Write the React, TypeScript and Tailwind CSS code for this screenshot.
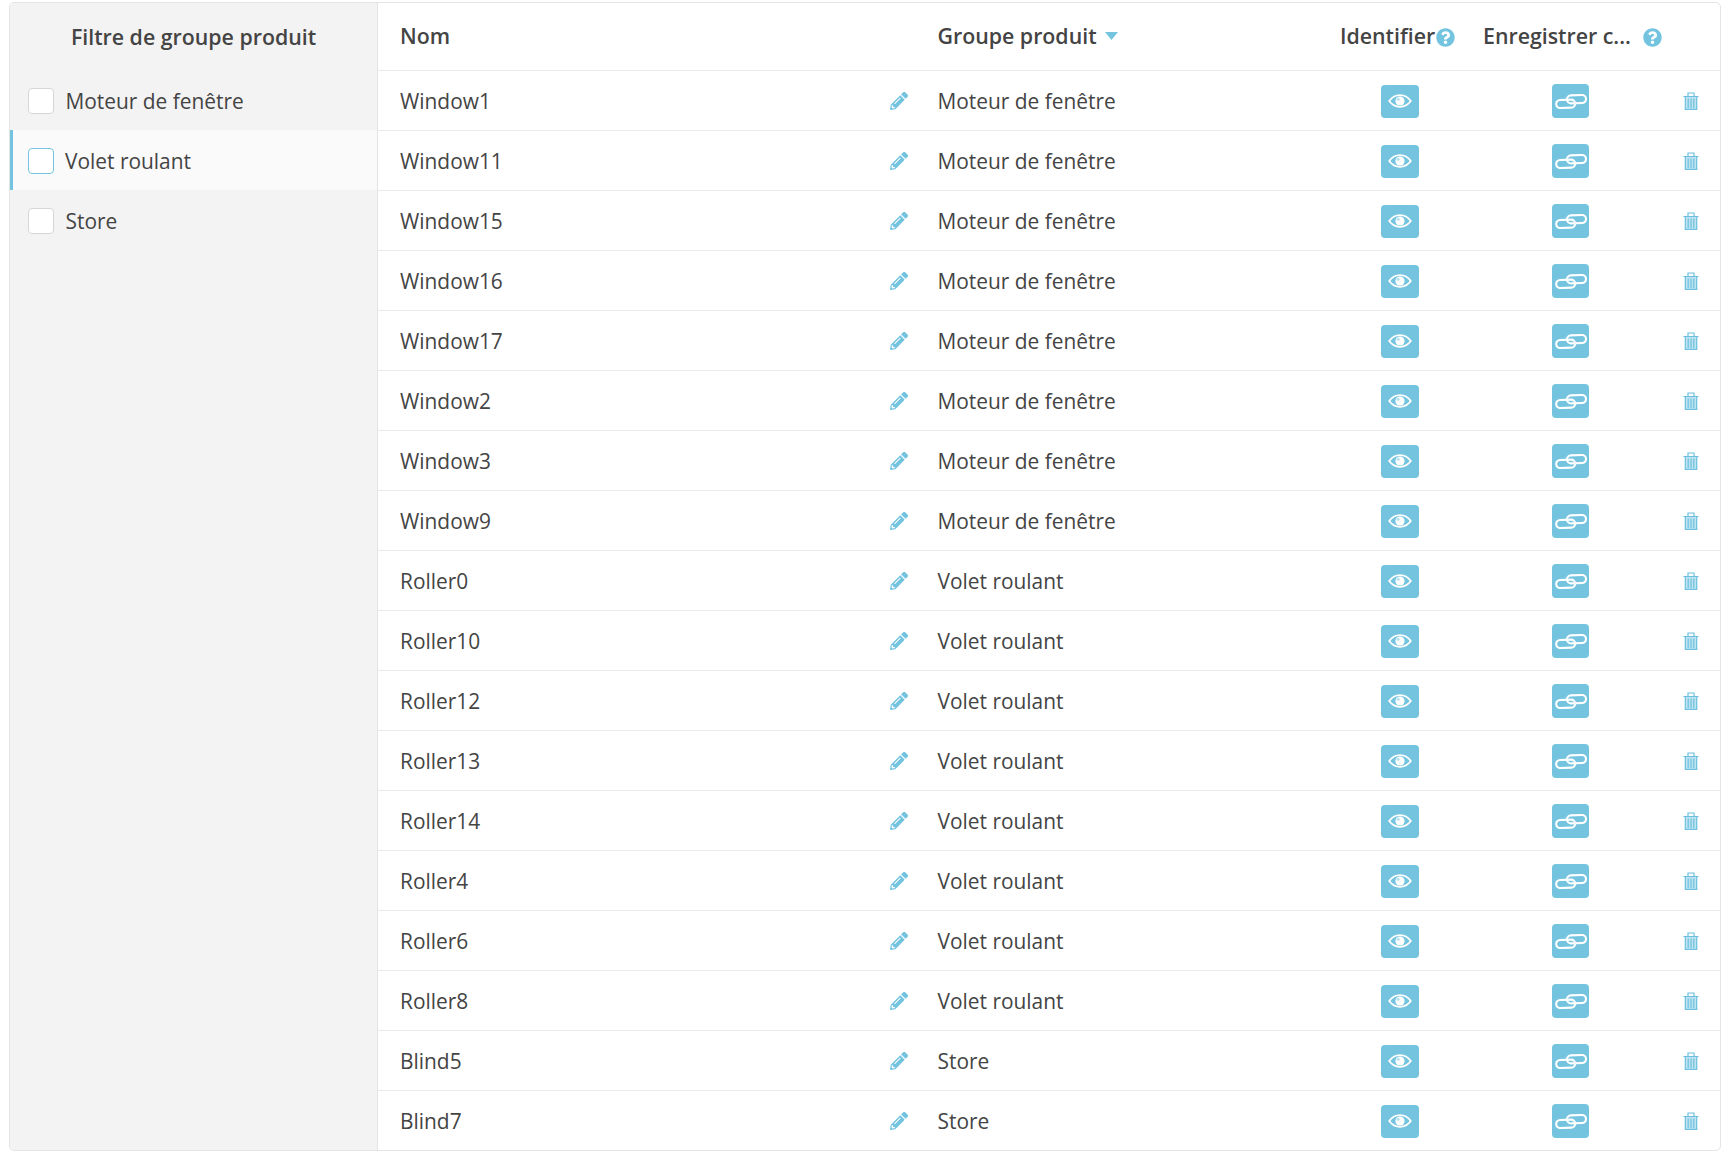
import { FaPencilAlt, FaQuestionCircle } from "react-icons/fa";

const products = [
  { name: "Window1", group: "Moteur de fenêtre" },
  { name: "Window11", group: "Moteur de fenêtre" },
  { name: "Window15", group: "Moteur de fenêtre" },
  { name: "Window16", group: "Moteur de fenêtre" },
  { name: "Window17", group: "Moteur de fenêtre" },
  { name: "Window2", group: "Moteur de fenêtre" },
  { name: "Window3", group: "Moteur de fenêtre" },
  { name: "Window9", group: "Moteur de fenêtre" },
  { name: "Roller0", group: "Volet roulant" },
  { name: "Roller10", group: "Volet roulant" },
  { name: "Roller12", group: "Volet roulant" },
  { name: "Roller13", group: "Volet roulant" },
  { name: "Roller14", group: "Volet roulant" },
  { name: "Roller4", group: "Volet roulant" },
  { name: "Roller6", group: "Volet roulant" },
  { name: "Roller8", group: "Volet roulant" },
  { name: "Blind5", group: "Store" },
  { name: "Blind7", group: "Store" },
];

const filters = [
  { label: "Moteur de fenêtre", active: false },
  { label: "Volet roulant", active: true },
  { label: "Store", active: false },
];

function EyeIcon() {
  return (
    <svg width="24" height="14" viewBox="0 0 24 14" fill="none">
      <path
        d="M1.2 7C4 3.2 7.8 1.2 12 1.2S20 3.2 22.8 7C20 10.8 16.2 12.8 12 12.8S4 10.8 1.2 7Z"
        stroke="white"
        strokeWidth="1.8"
      />
      <circle cx="12" cy="7" r="4.6" fill="white" />
      <circle cx="10.2" cy="5.2" r="1.5" fill="#b5e0ef" />
    </svg>
  );
}

function LinkIcon() {
  return (
    <svg className="ml-[1px]" width="32" height="15" viewBox="0 0 32 15" fill="none" stroke="white" strokeWidth="2.1">
      <rect x="12" y="1.2" width="19" height="8" rx="4" transform="rotate(-2 21 5)" />
      <rect x="1.2" y="5.8" width="19" height="8" rx="4" transform="rotate(-2 11 10)" />
    </svg>
  );
}

function TrashIcon() {
  return (
    <svg width="16" height="18" viewBox="0 0 16 18" fill="none">
      <rect x="2" y="4.5" width="12" height="13" fill="#bfe3f0" />
      <path d="M0.5 4.5H15.5M5 4.2V1H11V4.2" stroke="#6cc0de" strokeWidth="1.2" />
      <path
        d="M2.3 4.5V17.3H13.7V4.5M5.2 6.5V16M8 6.5V16M10.8 6.5V16"
        stroke="#6cc0de"
        strokeWidth="1.2"
      />
    </svg>
  );
}

function HelpIcon({ className }: { className: string }) {
  return <FaQuestionCircle className={`h-[19px] w-[19px] text-[#74c4e0] ${className}`} />;
}

function Sidebar() {
  return (
    <div className="w-[368px] shrink-0 border-r border-[#e4e4e4] bg-[#f3f3f3]">
      <div className="flex h-[67px] items-center justify-center pt-[1px] text-[21.33px] font-semibold">
        Filtre de groupe produit
      </div>
      {filters.map((f) => (
        <div
          key={f.label}
          className={
            f.active
              ? "flex h-[60px] items-center gap-[11px] border-l-[3px] border-[#74c4e0] bg-[#fafafa] pl-[15px] pt-[2px]"
              : "flex h-[60px] items-center gap-[11.5px] pl-[18px] pt-[2px]"
          }
        >
          <span
            className={
              f.active
                ? "h-[26px] w-[26px] rounded-[4px] border border-[#74c4e0] bg-white"
                : "h-[26px] w-[26px] rounded-[4px] border border-[#d6d6d6] bg-white"
            }
          />
          <span className="pt-[2px]">{f.label}</span>
        </div>
      ))}
    </div>
  );
}

function ProductRow({ name, group }: { name: string; group: string }) {
  return (
    <div className="grid h-[60px] grid-cols-[538px_401px_166px_174px_63px] items-center border-b border-[#e9e9e9] last:h-[59px] last:border-b-0">
      <div className="flex items-center justify-between pl-[22px] pr-[8px]">
        <span className="pt-[2px]">{name}</span>
        <FaPencilAlt className="mt-[2px] h-[18px] w-[18px] text-[#74c4e0]" />
      </div>
      <div className="pl-[21.5px] pt-[2px]">{group}</div>
      <div className="flex justify-center pt-[1px]">
        <button className="flex h-[33px] w-[38px] items-center justify-center rounded-[4px] bg-[#74c4e0]">
          <EyeIcon />
        </button>
      </div>
      <div className="flex justify-center pt-[1px]">
        <button className="flex h-[34px] w-[37px] items-center justify-center rounded-[4px] bg-[#74c4e0]">
          <LinkIcon />
        </button>
      </div>
      <div className="flex justify-center pl-[4px]">
        <TrashIcon />
      </div>
    </div>
  );
}

export default function App() {
  return (
    <div className="pl-[9px] pt-[2px] font-['Open_Sans',sans-serif] text-[20.9px] text-[#444444]">
      <div className="flex w-[1712px] overflow-hidden rounded-[5px] border border-[#e4e4e4] bg-white">
        <Sidebar />
        <div className="flex-1">
          <div className="grid h-[68px] grid-cols-[538px_401px_166px_174px_63px] items-center border-b border-[#e9e9e9] pb-[2px] text-[21.33px] font-semibold">
            <div className="pl-[22px]">Nom</div>
            <div className="flex items-center gap-[8px] pl-[21.5px]">
              Groupe produit
              <svg className="mt-[2px]" width="13" height="8" viewBox="0 0 13 8">
                <path d="M0 0H13L6.5 8Z" fill="#74c4e0" />
              </svg>
            </div>
            <div className="flex items-center pl-[23px]">
              Identifier
              <HelpIcon className="ml-[1px] mt-[5px]" />
            </div>
            <div className="col-span-2 flex items-center">
              <span className="w-[160px]">Enregistrer c...</span>
              <HelpIcon className="mt-[5px]" />
            </div>
          </div>
          {products.map((p) => (
            <ProductRow key={p.name} name={p.name} group={p.group} />
          ))}
        </div>
      </div>
    </div>
  );
}
